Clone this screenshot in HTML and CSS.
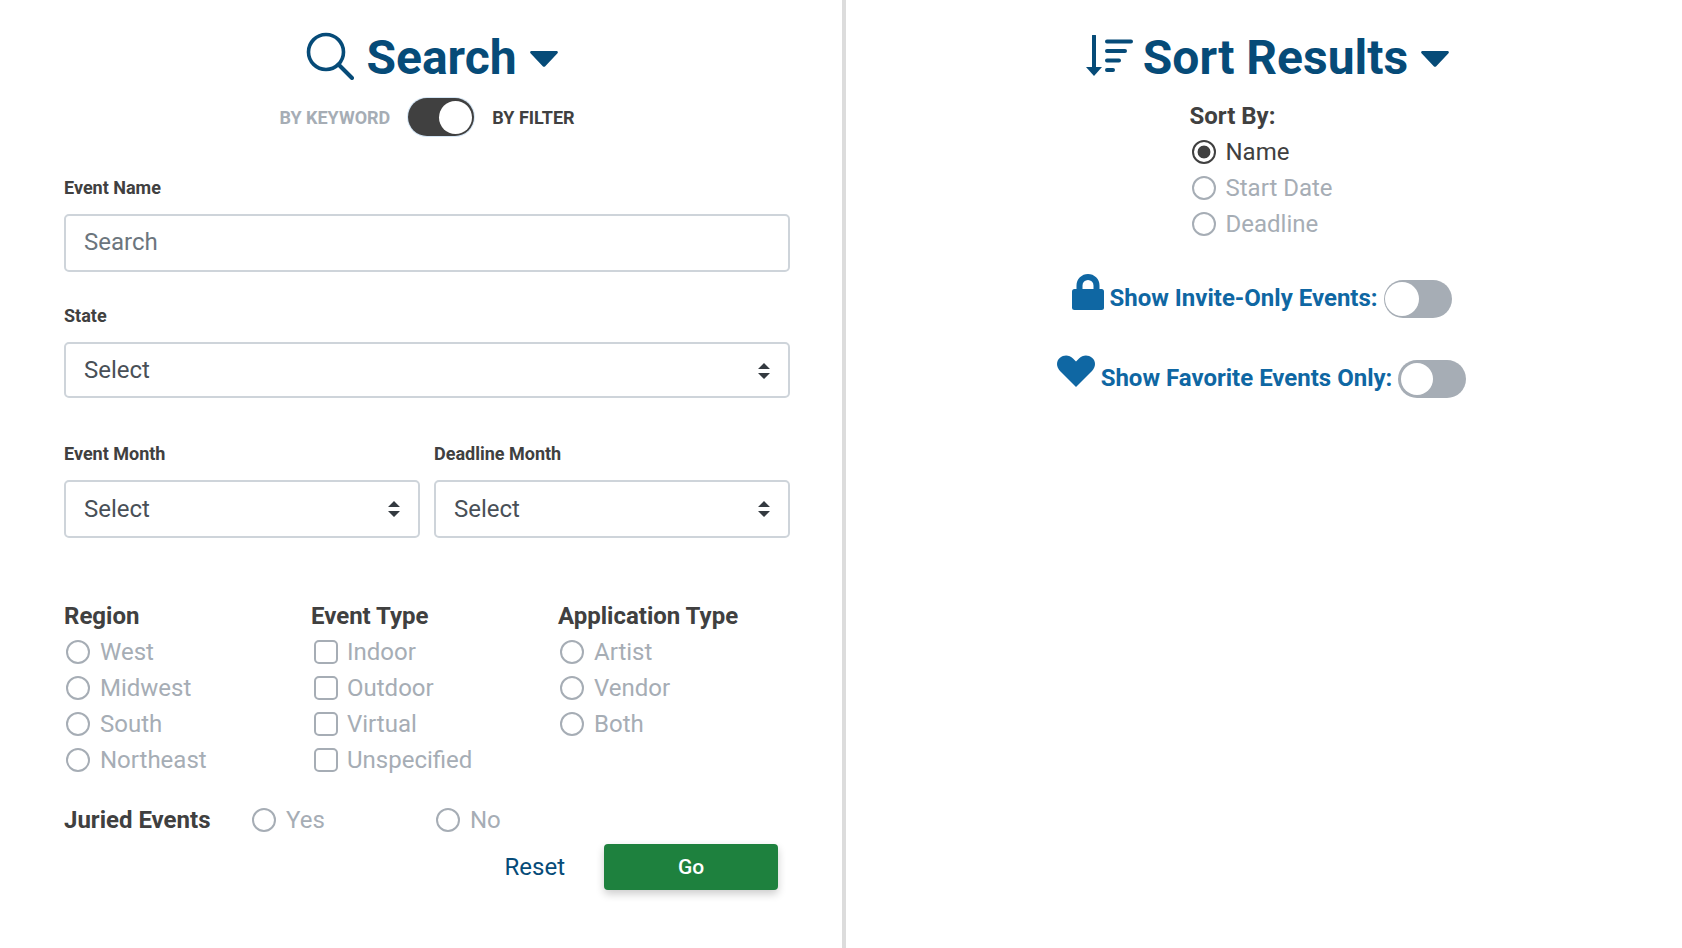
FILE: index.html
```html
<!DOCTYPE html>
<html lang="en">
<head>
<meta charset="utf-8">
<title>Search</title>
<link rel="stylesheet" href="styles.css">
</head>
<body>
<main class="page">
  <section class="panel panel-left">
    <h2 class="title">
      <svg class="ic-search" viewBox="0 0 48 48"><circle cx="20" cy="20" r="17.5" fill="none" stroke="currentColor" stroke-width="3.6"/><path d="M32.5 32.5 46 46" fill="none" stroke="currentColor" stroke-width="4" stroke-linecap="round"/></svg>
      <span>Search</span>
      <svg class="caret" viewBox="0 0 28 16"><path d="M1.5 0h25c1.2 0 1.8 1.4 1 2.3L15 15.4c-.6.6-1.5.6-2 0L.5 2.3C-.3 1.4.3 0 1.5 0z" fill="currentColor"/></svg>
    </h2>
    <div class="mode">
      <span class="mode-off">BY KEYWORD</span>
      <span class="toggle toggle-on"><i></i></span>
      <span class="mode-on">BY FILTER</span>
    </div>

    <label class="lbl lbl-name">Event Name</label>
    <div class="field field-text">Search</div>

    <label class="lbl lbl-state">State</label>
    <div class="field field-select field-state">Select
      <svg class="updown" viewBox="0 0 12 16"><path d="M6 0l6 6H0zM6 16l6-6H0z" fill="currentColor"/></svg>
    </div>

    <div class="months">
      <div>
        <label class="lbl">Event Month</label>
        <div class="field field-select">Select
          <svg class="updown" viewBox="0 0 12 16"><path d="M6 0l6 6H0zM6 16l6-6H0z" fill="currentColor"/></svg>
        </div>
      </div>
      <div>
        <label class="lbl">Deadline Month</label>
        <div class="field field-select">Select
          <svg class="updown" viewBox="0 0 12 16"><path d="M6 0l6 6H0zM6 16l6-6H0z" fill="currentColor"/></svg>
        </div>
      </div>
    </div>

    <div class="groups">
      <div class="group">
        <h3>Region</h3>
        <div class="opt"><i class="radio"></i>West</div>
        <div class="opt"><i class="radio"></i>Midwest</div>
        <div class="opt"><i class="radio"></i>South</div>
        <div class="opt"><i class="radio"></i>Northeast</div>
      </div>
      <div class="group">
        <h3>Event Type</h3>
        <div class="opt"><i class="check"></i>Indoor</div>
        <div class="opt"><i class="check"></i>Outdoor</div>
        <div class="opt"><i class="check"></i>Virtual</div>
        <div class="opt"><i class="check"></i>Unspecified</div>
      </div>
      <div class="group">
        <h3>Application Type</h3>
        <div class="opt"><i class="radio"></i>Artist</div>
        <div class="opt"><i class="radio"></i>Vendor</div>
        <div class="opt"><i class="radio"></i>Both</div>
      </div>
    </div>

    <div class="juried">
      <h3>Juried Events</h3>
      <div class="opt opt-yes"><i class="radio"></i>Yes</div>
      <div class="opt"><i class="radio"></i>No</div>
    </div>

    <div class="actions">
      <a class="reset">Reset</a>
      <button class="go" type="button">Go</button>
    </div>
  </section>

  <section class="panel panel-right">
    <h2 class="title">
      <svg class="ic-sort" viewBox="0 0 48 42"><path d="M9 1v36" fill="none" stroke="currentColor" stroke-width="4" stroke-linecap="round"/><path d="M1 32h16l-8 9z" fill="currentColor"/><path d="M22 6.500h24M22 16h18M22 25.500h12M22 35h6" fill="none" stroke="currentColor" stroke-width="4" stroke-linecap="round"/></svg>
      <span>Sort Results</span>
      <svg class="caret" viewBox="0 0 28 16"><path d="M1.500 0h25c1.200 0 1.800 1.400 1 2.300L15 15.400c-.6.6-1.500.6-2 0L.5 2.300C-.3 1.400.3 0 1.500 0z" fill="currentColor"/></svg>
    </h2>
    <div class="sortby">
      <h3>Sort By:</h3>
      <div class="opt opt-active"><i class="radio radio-on"></i>Name</div>
      <div class="opt"><i class="radio"></i>Start Date</div>
      <div class="opt"><i class="radio"></i>Deadline</div>
    </div>
    <div class="show show-lock">
      <svg class="ic-lock" viewBox="0 0 32 36"><path d="M7.500 16V11.500a8.500 8.500 0 0 1 17 0V16" fill="none" stroke="currentColor" stroke-width="6"/><rect y="15" width="32" height="21" rx="2.500" fill="currentColor"/></svg>
      <span>Show Invite-Only Events:</span>
      <span class="toggle toggle-off"><i></i></span>
    </div>
    <div class="show show-heart">
      <svg class="ic-heart" viewBox="0 0 38 32"><path d="M19 32 3 16C-1 12-1 6 3 2.800c4-3.400 9.500-2.800 13 .6L19 6.500l3-3.100c3.500-3.400 9-4 13-.6 4 3.200 4 9.200 0 13.200z" fill="currentColor"/></svg>
      <span>Show Favorite Events Only:</span>
      <span class="toggle toggle-off"><i></i></span>
    </div>
  </section>
</main>
</body>
</html>
```
FILE: styles.css
```css
* { box-sizing: border-box; }
html, body { margin: 0; height: 100%; }
body { background: #fff; font-family: Roboto, "Liberation Sans", sans-serif; color: #404040; overflow: hidden; }
.page { display: flex; height: 948px; }
.panel { height: 948px; }
.panel-left { width: 846px; padding: 0 52px 0 64px; border-right: 4px solid #dcdcdc; }
.panel-right { flex: 1; display: flex; flex-direction: column; align-items: center; padding-left: 6px; }

.title { margin: 0; padding-top: 30px; height: 86px; display: flex; align-items: flex-start; justify-content: center; color: #064b78; font-size: 48px; line-height: 56px; font-weight: 700; }
.panel-left .title { padding-left: 10px; }
.ic-search { width: 48px; height: 48px; margin: 2px 12px 0 0; }
.ic-sort { width: 48px; height: 42px; margin: 5px 10px 0 0; }
.caret { width: 28px; height: 16px; margin: 21px 0 0 13px; }

.mode { display: flex; justify-content: center; align-items: center; height: 38px; font-size: 18px; font-weight: 700; margin-top: 12px; }
.mode-off { color: #a6adb5; }
.mode-on { color: #404040; }
.toggle { position: relative; display: inline-block; width: 68px; height: 38px; border-radius: 19px; flex: none; }
.toggle i { position: absolute; top: 3px; width: 32px; height: 32px; border-radius: 50%; background: #fff; }
.toggle-on { width: 66px; background: #404040; margin: 0 18px; box-shadow: 0 0 0 1px #d5e6f5; }
.toggle-on i { right: 2px; top: 3px; width: 33px; height: 33px; }
.toggle-off { background: #a6adb5; margin: 2px 0 0 6px; }
.toggle-off i { left: 3px; }
.show-lock .toggle-off i { left: 1px; top: 2px; width: 34px; height: 34px; }

.lbl { display: block; font-size: 18px; line-height: 20px; font-weight: 700; color: #404040; }
.lbl-name { margin-top: 42px; }
.lbl-state { margin-top: 34px; }
.field { position: relative; height: 58px; margin-top: 16px; padding: 0 18px; border: 2px solid #ced4da; border-radius: 5px; font-size: 24px; line-height: 54px; color: #495057; background: #fff; }
.field-text { color: #6c757d; line-height: 53px; }
.field-state { height: 56px; line-height: 52px; }
.updown { position: absolute; right: 18px; top: 19px; width: 12px; height: 16px; color: #343a40; }

.months { display: grid; grid-template-columns: 356px 356px; column-gap: 14px; margin-top: 46px; }

.groups { display: grid; grid-template-columns: 247px 247px 1fr; margin-top: 60px; }
h3 { margin: 0; font-size: 24px; line-height: 36px; font-weight: 700; color: #404040; }
.opt { display: flex; align-items: center; height: 36px; font-size: 24px; color: #a6adb5; }
.radio, .check { flex: none; width: 24px; height: 24px; margin: 0 10px 0 2px; border: 2px solid #a6adb5; background: #fff; }
.radio { border-radius: 50%; }
.check { border-radius: 5px; margin-left: 3px; margin-right: 9px; }
.radio-on { border-color: #404040; background: radial-gradient(circle, #404040 0 6px, #fff 6.800px); }
.opt-active { color: #404040; }

.juried { display: flex; margin-top: 24px; height: 36px; }
.juried h3 { width: 187px; }
.juried .radio { margin-left: 1px; }
.opt-yes { width: 184px; }

.actions { display: flex; align-items: center; justify-content: flex-end; margin-top: 6px; padding-right: 12px; }
.reset { color: #064b78; font-size: 24px; margin-right: 39px; }
.go { width: 174px; height: 46px; border: 0; border-radius: 4px; background: #1e813e; color: #fff; font: 500 21px Roboto, sans-serif; box-shadow: 0 4px 8px rgba(0,0,0,.2); }

.sortby { width: 146px; margin-top: 13px; margin-left: -9px; }
.sortby h3 { line-height: 35px; }
.show { display: flex; color: #0f67a3; font-size: 24px; font-weight: 700; align-items: center; height: 38px; margin-left: -11px; }
.show-lock { margin-top: 37px; }
.show-heart { margin-top: 42px; }
.ic-lock { width: 32px; height: 36px; margin: -12px 5px 0 1px; }
.ic-heart { width: 38px; height: 32px; margin: -14px 6px 0 0; }
```
